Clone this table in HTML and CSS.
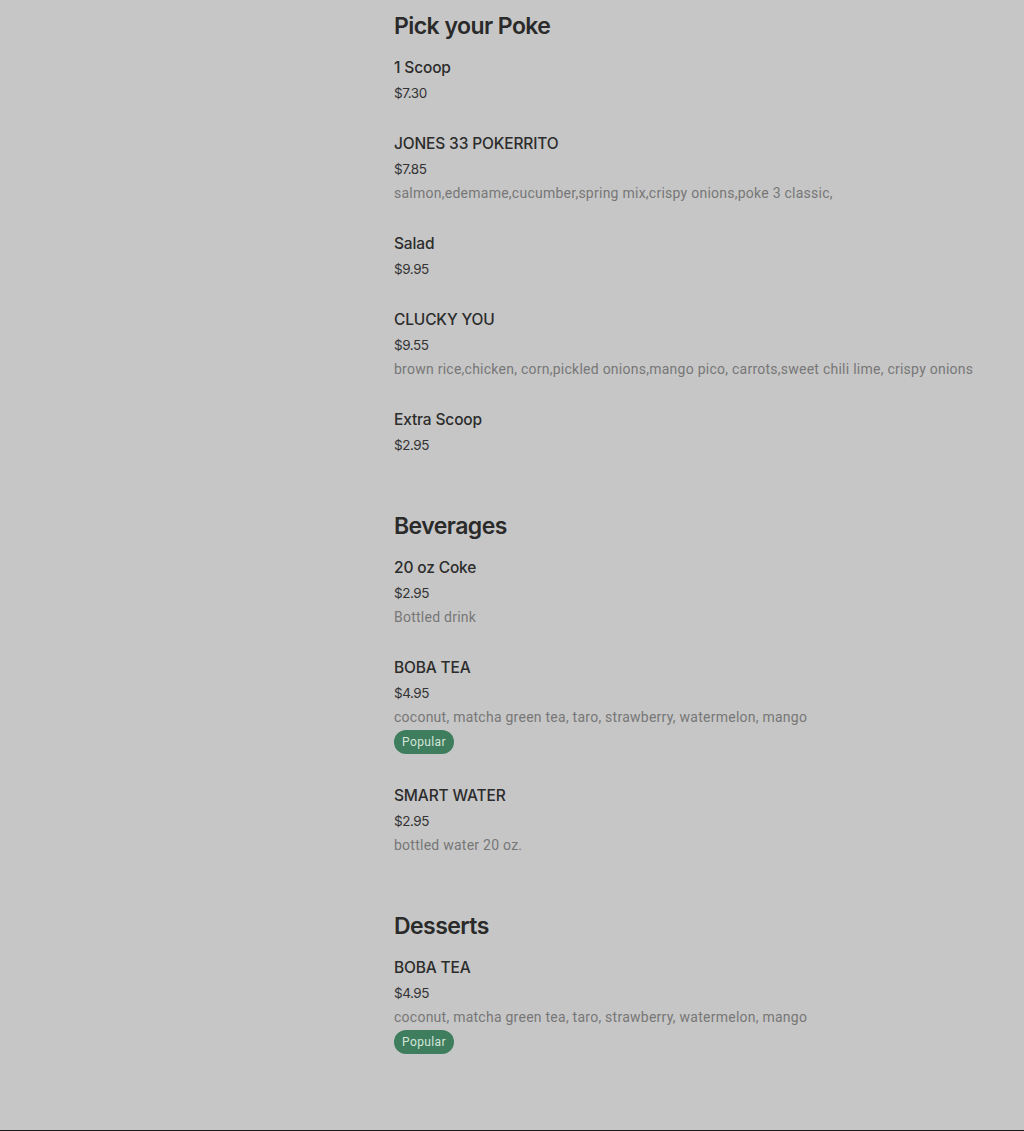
FILE: index.html
```html
<!DOCTYPE html>
<html lang="en">
<head>
<meta charset="utf-8">
<title>Menu</title>
<link rel="stylesheet" href="styles.css">
</head>
<body>
<main class="menu">
  <section class="section">
    <h2 class="section-title">Pick your Poke</h2>
    <ul class="items">
      <li class="item"><div class="item-title">1 Scoop</div><div class="item-price">$7.30</div></li>
      <li class="item"><div class="item-title">JONES 33 POKERRITO</div><div class="item-price">$7.85</div><div class="item-desc">salmon,edemame,cucumber,spring mix,crispy onions,poke 3 classic,</div></li>
      <li class="item"><div class="item-title">Salad</div><div class="item-price">$9.95</div></li>
      <li class="item"><div class="item-title">CLUCKY YOU</div><div class="item-price">$9.55</div><div class="item-desc">brown rice,chicken, corn,pickled onions,mango pico, carrots,sweet chili lime, crispy onions</div></li>
      <li class="item"><div class="item-title">Extra Scoop</div><div class="item-price">$2.95</div></li>
    </ul>
  </section>
  <section class="section">
    <h2 class="section-title">Beverages</h2>
    <ul class="items">
      <li class="item"><div class="item-title">20 oz Coke</div><div class="item-price">$2.95</div><div class="item-desc">Bottled drink</div></li>
      <li class="item"><div class="item-title">BOBA TEA</div><div class="item-price">$4.95</div><div class="item-desc">coconut, matcha green tea, taro, strawberry, watermelon, mango</div><div class="badges"><span class="badge">Popular</span></div></li>
      <li class="item"><div class="item-title">SMART WATER</div><div class="item-price">$2.95</div><div class="item-desc">bottled water 20 oz.</div></li>
    </ul>
  </section>
  <section class="section">
    <h2 class="section-title">Desserts</h2>
    <ul class="items">
      <li class="item"><div class="item-title">BOBA TEA</div><div class="item-price">$4.95</div><div class="item-desc">coconut, matcha green tea, taro, strawberry, watermelon, mango</div><div class="badges"><span class="badge">Popular</span></div></li>
    </ul>
  </section>
</main>
</body>
</html>
```
FILE: styles.css
```css
html, body {
  margin: 0;
  padding: 0;
  background: #c6c6c6;
}
body {
  min-height: 1130px;
  border-bottom: 1px solid #1a1a1a;
  font-family: Inter, "Liberation Sans", sans-serif;
  color: #2b2b2b;
}
.menu {
  padding: 9px 0 0 394px;
}
.section {
  margin-bottom: 41px;
}
.section-title {
  margin: 1px 0 -1px;
  font-size: 23px;
  line-height: 32px;
  font-weight: 600;
  letter-spacing: -0.55px;
  color: #2a2a2a;
}
.items {
  list-style: none;
  margin: 0;
  padding: 0;
}
.item {
  padding: 14px 0 12px;
}
.item-title {
  padding-top: 1px;
  font-size: 15.5px;
  line-height: 24px;
  font-weight: 500;
  letter-spacing: -0.15px;
  color: #2c2c2c;
}
.item-price {
  margin-top: 1px;
  font-size: 13.5px;
  line-height: 24px;
  color: #333;
  letter-spacing: -0.45px;
}
.item-desc {
  font-family: Roboto, "Liberation Sans", sans-serif;
  font-size: 14px;
  line-height: 24px;
  letter-spacing: 0.25px;
  color: #777;
}
.badges {
  display: flex;
  margin: 1px 0 3px;
}
.badge {
  padding: 0 8px;
  height: 24px;
  line-height: 24px;
  border-radius: 12px;
  background: #3e7d5e;
  color: #d4e5da;
  font-family: Roboto, "Liberation Sans", sans-serif;
  font-size: 12px;
  letter-spacing: 0.4px;
}
```
